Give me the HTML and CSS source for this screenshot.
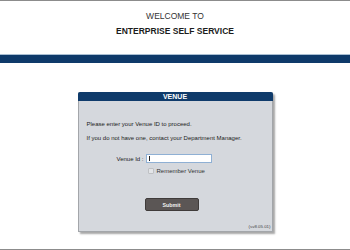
FILE: index.html
```html
<!DOCTYPE html>
<html lang="en">
<head>
    <meta charset="UTF-8">
    <meta name="viewport" content="width=device-width, initial-scale=1.0">
    <title>Enterprise Self Service</title>
    <link rel="stylesheet" href="styles.css">
</head>
<body>
    <header class="top">
        <p class="welcome">WELCOME TO</p>
        <h1 class="title">ENTERPRISE SELF SERVICE</h1>
    </header>
    <div class="band"></div>

    <section class="panel">
        <h2 class="panel-head">VENUE</h2>
        <form class="panel-body">
            <p class="info">Please enter your Venue ID to proceed.</p>
            <p class="info second">If you do not have one, contact your Department Manager.</p>

            <div class="field">
                <label for="venueId">Venue Id :</label>
                <span class="input-wrap">
                    <input type="text" id="venueId">
                </span>
            </div>

            <div class="remember">
                <input type="checkbox" id="remember">
                <label for="remember">Remember Venue</label>
            </div>

            <button type="submit" class="submit">Submit</button>

            <p class="version">(sv8.05.01)</p>
        </form>
    </section>

    <footer class="bottom"></footer>
</body>
</html>
```

FILE: styles.css
```css
body {
    font-family: "Liberation Sans", Arial, sans-serif;
    background-color: #fff;
    color: #222;
    margin: 0;
    padding: 0;
}

.top {
    border-top: 1px solid #8c8c8c;
    padding: 8px 0 15px;
    text-align: center;
    line-height: 15px;
    font-size: 8.5px;
}

.welcome {
    margin: 0;
    color: #333;
}

.title {
    margin: 0;
    font-size: 8.5px;
    font-weight: bold;
    color: #1c1c1c;
}

.band {
    border-top: 1px solid #a9bfd3;
    height: 8px;
    background-color: #0e3a6a;
}

.panel {
    width: 193px;
    margin: 29px auto 0;
    background-color: #d5d8dd;
    border: 1px solid #a3a6aa;
    border-top: none;
    border-radius: 2px 2px 0 0;
    box-shadow: 2px 2px 2px rgba(0, 0, 0, 0.35);
}

.panel-head {
    margin: 0 -1px;
    height: 9px;
    line-height: 9px;
    background-color: #0f3b6b;
    color: #fff;
    font-size: 7px;
    font-weight: bold;
    text-align: center;
    border-radius: 2px 2px 0 0;
}

.panel-body {
    padding: 19px 0 1px;
    font-size: 6px;
}

.info {
    margin: 0 0 0 8px;
    line-height: 8px;
}

.info.second {
    margin-top: 6px;
}

.field {
    display: flex;
    align-items: center;
    margin: 12px 0 0 37px;
    height: 9px;
}

.field label {
    width: 28px;
    margin-right: 2px;
    text-align: right;
    white-space: nowrap;
}

.input-wrap {
    position: relative;
    display: block;
}

/* blinking caret */
.input-wrap::after {
    content: "";
    position: absolute;
    left: 3px;
    top: 2px;
    width: 1px;
    height: 5px;
    background-color: #222;
}

.field input {
    display: block;
    box-sizing: border-box;
    width: 66px;
    height: 9px;
    margin: 0;
    padding: 0;
    border: 1px solid #8fb0d4;
    background-color: #fff;
    outline: none;
}

.remember {
    display: flex;
    align-items: center;
    margin: 5px 0 0 69px;
    height: 6px;
    line-height: 6px;
}

.remember input {
    appearance: none;
    box-sizing: border-box;
    width: 6px;
    height: 6px;
    margin: 0 3px 0 0;
    border: 1px solid #bfc1c4;
    border-radius: 1px;
    background-color: #e3e5e8;
}

.remember label {
    color: #333;
}

.submit {
    display: block;
    box-sizing: border-box;
    width: 54px;
    height: 13px;
    margin: 24px 0 0 66px;
    padding: 0;
    background-color: #5b5655;
    border: 1px solid #3f3b3a;
    border-radius: 2px;
    color: #f2f2f2;
    font-family: "Liberation Sans", Arial, sans-serif;
    font-size: 5.3px;
    font-weight: bold;
    cursor: pointer;
}

.version {
    margin: 13px 1px 0 0;
    line-height: 6px;
    font-size: 4.4px;
    text-align: right;
    color: #444;
}

.bottom {
    margin-top: 17px;
    border-top: 1px solid #8c8c8c;
}
```
